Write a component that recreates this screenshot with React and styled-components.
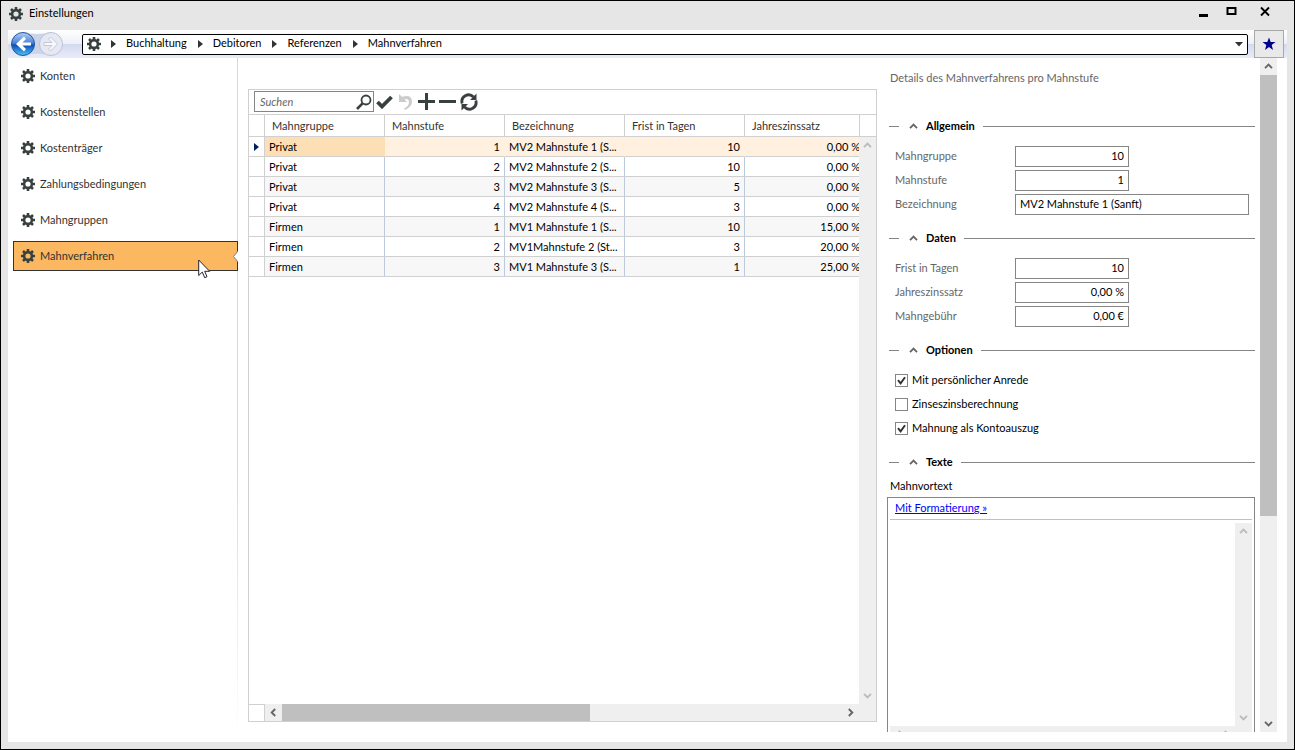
import React from "react";
import styled, { createGlobalStyle, css } from "styled-components";

const GlobalStyle = createGlobalStyle`
  * { box-sizing: border-box; }
  body {
    margin: 0;
    font-family: Lato, "Open Sans", sans-serif;
    font-size: 11px;
    line-height: 20px;
    color: #000;
  }
  button, input, textarea { font: inherit; color: inherit; }
  button { padding: 0; border: 0; background: none; }
`;

const menu = ["Konten", "Kostenstellen", "Kostenträger", "Zahlungsbedingungen", "Mahngruppen", "Mahnverfahren"];
const crumbs = ["Buchhaltung", "Debitoren", "Referenzen", "Mahnverfahren"];
const columns = ["Mahngruppe", "Mahnstufe", "Bezeichnung", "Frist in Tagen", "Jahreszinssatz"];
const rows = [
  ["Privat", "1", "MV2 Mahnstufe 1 (S...", "10", "0,00 %"],
  ["Privat", "2", "MV2 Mahnstufe 2 (S...", "10", "0,00 %"],
  ["Privat", "3", "MV2 Mahnstufe 3 (S...", "5", "0,00 %"],
  ["Privat", "4", "MV2 Mahnstufe 4 (S...", "3", "0,00 %"],
  ["Firmen", "1", "MV1 Mahnstufe 1 (S...", "10", "15,00 %"],
  ["Firmen", "2", "MV1Mahnstufe 2 (St...", "3", "20,00 %"],
  ["Firmen", "3", "MV1 Mahnstufe 3 (S...", "1", "25,00 %"],
];

const Window = styled.div`
  display: flex;
  flex-direction: column;
  height: 100vh;
  padding: 0 7px 7px;
  border: 1px solid #000;
  background: #e6e6e6;
  overflow: hidden;
`;
const TitleBar = styled.header`
  display: flex;
  align-items: center;
  gap: 6px;
  height: 29px;
  flex: none;
  padding: 0 2px 4px 1px;
`;
const Title = styled.h1`
  flex: 1;
  margin: 0;
  font-size: 11px;
  font-weight: 400;
  line-height: 18px;
  padding-bottom: 2px;
`;
const WindowButtons = styled.div`
  display: flex;
  align-items: center;
  height: 20px;
  padding-bottom: 4px;
`;
const WindowButton = styled.button`
  display: flex;
  width: ${(p) => (p.$close ? "40px" : "28px")};
  justify-content: center;
`;
const NavBar = styled.nav`
  display: flex;
  align-items: center;
  height: 28px;
  flex: none;
  padding: 0 3px 0 2px;
  background: linear-gradient(#fff 0, #eef0f8 50%, #d4daee 50%, #e8ecfa 100%);
`;
const HistoryButtons = styled.div`
  width: 72px;
  display: flex;
`;
const AddressBar = styled.div`
  display: flex;
  align-items: center;
  flex: 1;
  height: 21px;
  padding: 0 4px;
  border: 1px solid #000;
  border-radius: 2px;
  background: #fff;
`;
const Crumbs = styled.ol`
  display: flex;
  flex: 1;
  margin: 0;
  padding: 0 0 0 10px;
  list-style: none;
`;
const Crumb = styled.li`
  display: flex;
  align-items: center;
  gap: 10px;
  margin-right: 11px;
  a { color: inherit; text-decoration: none; line-height: 18px; padding-bottom: 2px; }
`;
const Favorite = styled.button`
  display: flex;
  align-items: center;
  justify-content: center;
  width: 30px;
  height: 28px;
  margin-left: 6px;
  border: 1px solid #a8a8a8;
  background: #e9e9e9;
`;
const Content = styled.div`
  display: flex;
  flex: 1;
  min-height: 0;
  background: #fff;
`;
const Sidebar = styled.aside`
  flex: none;
  width: 230px;
  padding: 3px 0 0 5px;
  background: linear-gradient(#d9d9d9, #d9d9d9 60%, #fff) right / 1px 100% no-repeat;
`;
const MenuItem = styled.a`
  position: relative;
  display: flex;
  align-items: center;
  gap: 5px;
  height: 30px;
  margin-bottom: 6px;
  padding-left: 7px;
  border: 1px solid transparent;
  color: #333;
  text-decoration: none;
  ${(p) => p.$active && css`
    border-color: #333;
    background: #fbb860;
  `}
`;
const Notch = styled.svg`
  position: absolute;
  right: -1px;
  top: 9px;
`;
const Pointer = styled.svg`
  position: absolute;
  left: 184px;
  top: 17px;
  z-index: 1;
`;
const GridPanel = styled.section`
  display: flex;
  flex-direction: column;
  flex: 1;
  min-width: 0;
  margin: 31px 10px 20px;
  border: 1px solid #d0d0d0;
`;
const GridToolbar = styled.div`
  display: flex;
  align-items: center;
  gap: 2px;
  height: 25px;
  flex: none;
  padding: 0 5px 1px;
  border-bottom: 1px solid #d0d0d0;
`;
const SearchBox = styled.label`
  display: flex;
  align-items: center;
  width: 120px;
  height: 21px;
  padding: 0 1px 0 5px;
  border: 1px solid #858585;
  input {
    flex: 1;
    min-width: 0;
    height: 18px;
    padding: 0;
    border: 0;
    outline: 0;
    background: none;
    font-style: italic;
  }
  input::placeholder { color: #666; }
`;
const Tools = styled.div`
  display: flex;
  gap: 2px;
  margin-left: -1px;
`;
const ToolButton = styled.button`
  display: flex;
  width: 19px;
  height: 20px;
  align-items: center;
  justify-content: center;
`;
const GridArea = styled.div`
  display: flex;
  flex: 1;
  min-height: 0;
`;
const TableWrap = styled.div`
  flex: 1;
  min-width: 0;
  overflow: hidden;
`;
const Table = styled.table`
  width: 616px;
  table-layout: fixed;
  border-collapse: separate;
  border-spacing: 0;
`;
const Th = styled.th`
  height: 22px;
  width: 120px;
  padding: 0 7px;
  border-right: 1px solid #d0d0d0;
  border-bottom: 1px solid #d0d0d0;
  color: #333;
  font-weight: 400;
  line-height: 21px;
  text-align: left;
`;
const MarkerTh = styled(Th)`
  width: 16px;
  padding: 0;
`;
const Td = styled.td`
  height: 20px;
  padding: 0 4px;
  border-right: 1px solid ${(p) => (p.$selected ? "transparent" : "#bccbdc")};
  border-bottom: 1px solid #d0d0d0;
  line-height: 19px;
  text-align: ${(p) => (p.$number ? "right" : "left")};
  overflow: hidden;
  white-space: nowrap;
  text-overflow: ellipsis;
`;
const MarkerTd = styled(Td)`
  padding: 0 0 0 5px;
  border-right-color: #d0d0d0;
  background: #fff;
  line-height: 0;
`;
const Tr = styled.tr`
  background: ${(p) => (p.$selected ? "#fff0e0" : "#fff")};
  &:nth-child(odd) { background: ${(p) => (p.$selected ? "#fff0e0" : "#f7f7f7")}; }
  ${(p) => p.$selected && css`
    td:nth-child(2) { background: #fddfb5; }
  `}
`;
const ScrollSide = styled.div`
  display: flex;
  flex-direction: column;
  width: 17px;
  flex: none;
`;
const Corner = styled.div`
  height: 22px;
  flex: none;
  border-left: 1px solid #d0d0d0;
  border-bottom: 1px solid #d0d0d0;
`;
const Scrollbar = styled.div`
  display: flex;
  flex-direction: ${(p) => (p.$horizontal ? "row" : "column")};
  justify-content: space-between;
  flex: ${(p) => (p.$fixed ? "none" : "1")};
  min-${(p) => (p.$horizontal ? "height" : "width")}: 17px;
  background: #efefef;
`;
const ScrollButton = styled.button`
  display: flex;
  align-items: center;
  justify-content: center;
  width: 17px;
  height: 17px;
  flex: none;
`;
const Thumb = styled.div`
  flex: 0 0 ${(p) => p.$size};
  margin-${(p) => (p.$horizontal ? "right" : "bottom")}: auto;
  background: #bfbfbf;
`;
const ScrollFooter = styled.div`
  display: flex;
  height: 17px;
  flex: none;
`;
const FooterCorner = styled.div`
  width: 16px;
  border-top: 1px solid #d0d0d0;
  border-right: 1px solid #d0d0d0;
`;
const FooterEnd = styled.div`
  width: 17px;
  background: #efefef;
`;
const Details = styled.section`
  display: flex;
  flex: none;
  width: 390px;
  margin: 0 10px 10px 0;
  overflow: hidden;
`;
const DetailsBody = styled.div`
  flex: 1;
  min-width: 0;
  margin-right: 5px;
  overflow: hidden;
`;
const DetailsTitle = styled.h2`
  margin: 10px 3px 28px;
  font-size: 11px;
  font-weight: 400;
  color: #666;
`;
const Group = styled.section`
  padding-bottom: 10px;
`;
const GroupHeader = styled.h3`
  display: flex;
  align-items: center;
  gap: 8px;
  height: 20px;
  margin: 0 0 ${(p) => (p.$tight ? "4px" : "10px")} 2px;
  font-size: 11px;
  font-weight: 700;
  &::before { content: ""; width: 10px; height: 1px; margin-right: 2px; background: #858585; }
  &::after { content: ""; flex: 1; height: 1px; background: #858585; }
`;
const Field = styled.label`
  display: flex;
  height: 21px;
  margin: 0 6px 3px 8px;
  color: #666;
  span { width: 120px; flex: none; }
`;
const FieldInput = styled.input`
  width: ${(p) => (p.$wide ? "234px" : "114px")};
  padding: 0 4px 1px;
  border: 1px solid #858585;
  border-radius: 0;
  color: #000;
  text-align: ${(p) => (p.$wide ? "left" : "right")};
`;
const CheckField = styled.label`
  display: flex;
  align-items: center;
  gap: 4px;
  height: 20px;
  margin: 0 0 4px 8px;
`;
const Check = styled.input`
  appearance: none;
  width: 13px;
  height: 13px;
  margin: 0;
  border: 1px solid #858585;
  background: #fff;
  &:checked {
    background: center / 9px 9px no-repeat
      url("data:image/svg+xml,%3Csvg xmlns='http://www.w3.org/2000/svg' viewBox='0 0 9 9'%3E%3Cpath d='M1 4.2 3.6 7.4 8 1.2' fill='none' stroke='%23333' stroke-width='1.9'/%3E%3C/svg%3E");
  }
`;
const TextLabel = styled.label`
  display: block;
  margin: 0 3px 1px;
`;
const Editor = styled.div`
  height: 246px;
  padding: 0 2px;
  border: 1px solid #858585;
`;
const EditorHeader = styled.div`
  height: 22px;
  margin-bottom: 3px;
  padding: 0 5px;
  border-bottom: 1px solid #c0c0c0;
  a { color: #00f; }
`;
const EditorRow = styled.div`
  display: flex;
  height: 203px;
  textarea {
    flex: 1;
    padding: 4px;
    border: 0;
    outline: 0;
    resize: none;
  }
`;

const Gear = ({ size = 14 }) => (
  <svg width={size} height={size} viewBox="0 0 14 14" fill="none" stroke="#384040">
    <circle cx="7" cy="7" r="3.9" strokeWidth="2.6" />
    <path d="M7 0v2.4M7 11.6V14M0 7h2.4M11.6 7H14M2 2l1.8 1.8M10.2 10.2 12 12M2 12l1.8-1.8M10.2 3.8 12 2" strokeWidth="2.6" />
  </svg>
);

const rotation = { up: 0, right: 90, down: 180, left: 270 };
const Chevron = ({ dir = "up", color = "#666" }) => (
  <svg width="9" height="9" viewBox="0 0 9 9">
    <path d="M1 6.2 4.5 2.7 8 6.2" fill="none" stroke={color} strokeWidth="1.9" transform={`rotate(${rotation[dir]} 4.5 4.5)`} />
  </svg>
);

const Arrow = ({ color = "#333" }) => (
  <svg width="5" height="8" viewBox="0 0 5 8">
    <path d="M0 0 5 4 0 8z" fill={color} />
  </svg>
);

const Scroll = ({ horizontal, fixed, thumb, color }) => (
  <Scrollbar $horizontal={horizontal} $fixed={fixed}>
    <ScrollButton aria-label="Zurück"><Chevron dir={horizontal ? "left" : "up"} color={color} /></ScrollButton>
    {thumb && <Thumb $size={thumb} $horizontal={horizontal} />}
    <ScrollButton aria-label="Weiter"><Chevron dir={horizontal ? "right" : "down"} color={color} /></ScrollButton>
  </Scrollbar>
);

const History = () => (
  <HistoryButtons>
    <svg width="56" height="26" viewBox="0 0 56 26">
      <defs>
        <linearGradient id="back" x1="0" y1="0" x2="0" y2="1">
          <stop offset="0" stopColor="#b4cdf2" />
          <stop offset="0.45" stopColor="#4a86dc" />
          <stop offset="0.55" stopColor="#0d4fb4" />
          <stop offset="1" stopColor="#4cc4fa" />
        </linearGradient>
      </defs>
      <path d="M13 1Q27 5 41 1V25Q27 20 13 25z" fill="#ccd4ea" />
      <circle cx="13" cy="13" r="11.5" fill="url(#back)" stroke="#2a559c" />
      <path d="M21 11.5H12.5L16 8 14 5.500 6 13 14 20.500 16 18 12.500 14.500H21z" fill="#fff" />
      <circle cx="41" cy="13" r="11.5" fill="#e6e9f4" stroke="#bcc3d6" />
      <path d="M34 11.5H42L38.5 8 40.5 6 47.5 13 40.5 20 38.5 18 42 14.5H34z" fill="#f8f9fc" stroke="#c3c8d8" />
    </svg>
  </HistoryButtons>
);

const DetailGroup = ({ title, tight, children }) => (
  <Group>
    <GroupHeader $tight={tight}><Chevron />{title}</GroupHeader>
    {children}
  </Group>
);

const TextField = ({ label, value, wide }) => (
  <Field>
    <span>{label}</span>
    <FieldInput type="text" defaultValue={value} $wide={wide} />
  </Field>
);

const CheckBox = ({ label, checked }) => (
  <CheckField>
    <Check type="checkbox" defaultChecked={checked} />
    {label}
  </CheckField>
);

const App = () => {
  return (
    <>
      <GlobalStyle />
      <Window>
        <TitleBar>
          <Gear />
          <Title>Einstellungen</Title>
          <WindowButtons>
            <WindowButton aria-label="Minimieren">
              <svg width="11" height="11"><path d="M1 8h9v3H1z" /></svg>
            </WindowButton>
            <WindowButton aria-label="Maximieren">
              <svg width="11" height="11"><path d="M1.5 2h8v6h-8z" fill="none" stroke="#000" strokeWidth="2" /></svg>
            </WindowButton>
            <WindowButton $close aria-label="Schließen">
              <svg width="11" height="11"><path d="M1 1.5 9 9.5M9 1.5 1 9.5" stroke="#000" strokeWidth="1.8" /></svg>
            </WindowButton>
          </WindowButtons>
        </TitleBar>
        <NavBar>
          <History />
          <AddressBar>
            <Gear />
            <Crumbs>
              {crumbs.map((crumb) => (
                <Crumb key={crumb}>
                  <Arrow />
                  <a href="#">{crumb}</a>
                </Crumb>
              ))}
            </Crumbs>
            <svg width="8" height="5"><path d="M0 0h8L4 4.5z" fill="#333" /></svg>
          </AddressBar>
          <Favorite aria-label="Favorit">
            <svg width="14" height="14" viewBox="0 0 14 14">
              <path d="M7 .5 8.7 5H13.5L9.7 8 11 13 7 10 3 13 4.3 8 .5 5H5.3z" fill="#00008b" />
            </svg>
          </Favorite>
        </NavBar>
        <Content>
          <Sidebar>
            {menu.map((item) => (
              <MenuItem key={item} href="#" $active={item === "Mahnverfahren"}>
                <Gear />
                {item}
                {item === "Mahnverfahren" && (
                  <>
                    <Notch width="5" height="11"><path d="M5 0 0 5.5 5 11z" fill="#fff" /><path d="M5 0 .5 5.5 5 11" fill="none" stroke="#777" /></Notch>
                    <Pointer width="13" height="20" viewBox="0 0 13 20">
                      <path d="M.7 1v15.5l3.6-3.4 2.4 5.6 2.3-1L6.7 12.3h5z" fill="#fff" stroke="#223" />
                    </Pointer>
                  </>
                )}
              </MenuItem>
            ))}
          </Sidebar>
          <GridPanel>
            <GridToolbar>
              <SearchBox>
                <input type="text" placeholder="Suchen" aria-label="Suchen" />
                <svg width="16" height="16" viewBox="0 0 16 16" fill="none" stroke="#384040">
                  <circle cx="10" cy="6" r="4.5" strokeWidth="1.8" />
                  <path d="M6.6 9.4 1 15" strokeWidth="2.6" />
                </svg>
              </SearchBox>
              <Tools>
                <ToolButton aria-label="Übernehmen">
                  <svg width="17" height="14" viewBox="0 0 17 14"><path d="M1.5 7 6 11.5 15.5 2" fill="none" stroke="#384040" strokeWidth="3.8" /></svg>
                </ToolButton>
                <ToolButton aria-label="Rückgängig">
                  <svg width="13" height="16" viewBox="0 0 13 16">
                    <path d="M0 0v8h8L5.5 5.5Q9.5 4 10 8 10 12 5 14.5L6 16Q13 13 13 7.5 12.5 0 3 2.8z" fill="#ccc" />
                  </svg>
                </ToolButton>
                <ToolButton aria-label="Hinzufügen">
                  <svg width="17" height="17"><path d="M8.5 0v17M0 8.5h17" stroke="#384040" strokeWidth="3" /></svg>
                </ToolButton>
                <ToolButton aria-label="Entfernen">
                  <svg width="17" height="17"><path d="M0 8.5h17" stroke="#384040" strokeWidth="3" /></svg>
                </ToolButton>
                <ToolButton aria-label="Aktualisieren">
                  <svg width="18" height="18" viewBox="0 0 18 18">
                    <path d="M2.2 10.5A6.7 6.7 0 0 1 13.5 4M15.8 7.5A6.7 6.7 0 0 1 4.5 14" fill="none" stroke="#384040" strokeWidth="2.8" />
                    <path d="M16.5.5V7H10zM1.5 17.5V11H8z" fill="#384040" />
                  </svg>
                </ToolButton>
              </Tools>
            </GridToolbar>
            <GridArea>
              <TableWrap>
                <Table>
                  <thead>
                    <tr>
                      <MarkerTh />
                      {columns.map((column) => <Th key={column}>{column}</Th>)}
                    </tr>
                  </thead>
                  <tbody>
                    {rows.map((row, i) => (
                      <Tr key={i} $selected={i === 0}>
                        <MarkerTd>{i === 0 && <Arrow color="#002060" />}</MarkerTd>
                        {row.map((cell, c) => (
                          <Td key={c} $selected={i === 0} $number={c !== 0 && c !== 2}>{cell}</Td>
                        ))}
                      </Tr>
                    ))}
                  </tbody>
                </Table>
              </TableWrap>
              <ScrollSide>
                <Corner />
                <Scroll color="#bbb" />
              </ScrollSide>
            </GridArea>
            <ScrollFooter>
              <FooterCorner />
              <Scroll horizontal thumb="308px" />
              <FooterEnd />
            </ScrollFooter>
          </GridPanel>
          <Details>
            <DetailsBody>
              <DetailsTitle>Details des Mahnverfahrens pro Mahnstufe</DetailsTitle>
              <DetailGroup title="Allgemein">
                <TextField label="Mahngruppe" value="10" />
                <TextField label="Mahnstufe" value="1" />
                <TextField label="Bezeichnung" value="MV2 Mahnstufe 1 (Sanft)" wide />
              </DetailGroup>
              <DetailGroup title="Daten">
                <TextField label="Frist in Tagen" value="10" />
                <TextField label="Jahreszinssatz" value="0,00 %" />
                <TextField label="Mahngebühr" value="0,00 €" />
              </DetailGroup>
              <DetailGroup title="Optionen">
                <CheckBox label="Mit persönlicher Anrede" checked />
                <CheckBox label="Zinseszinsberechnung" />
                <CheckBox label="Mahnung als Kontoauszug" checked />
              </DetailGroup>
              <DetailGroup title="Texte" tight>
                <TextLabel htmlFor="vortext">Mahnvortext</TextLabel>
                <Editor>
                  <EditorHeader><a href="#">Mit Formatierung »</a></EditorHeader>
                  <EditorRow>
                    <textarea id="vortext" />
                    <Scroll fixed color="#bbb" />
                  </EditorRow>
                  <ScrollFooter>
                    <Scroll horizontal color="#bbb" />
                    <FooterEnd />
                  </ScrollFooter>
                </Editor>
              </DetailGroup>
            </DetailsBody>
            <Scroll fixed thumb="441px" />
          </Details>
        </Content>
      </Window>
    </>
  );
};

export default App;
